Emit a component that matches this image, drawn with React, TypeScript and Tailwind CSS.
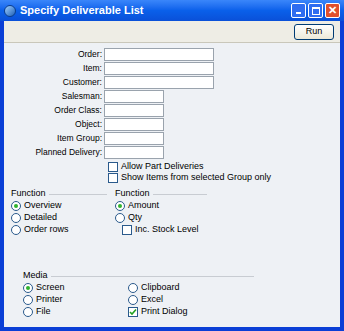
import React from "react";

const font = { fontFamily: '"Liberation Sans", Arial, sans-serif' };

function Radio({ on, label }: { on?: boolean; label: string }) {
  return (
    <div className="flex items-center h-[12px] gap-[3px]">
      <span className="w-[10px] h-[10px] rounded-full border border-[#2a5a8c] bg-white flex items-center justify-center">
        {on && <span className="w-[4px] h-[4px] rounded-full bg-[#2fb32f]" />}
      </span>
      <span>{label}</span>
    </div>
  );
}

function Check({ on, label }: { on?: boolean; label: string }) {
  return (
    <div className="flex items-center h-[11px] gap-[3px]">
      <span className="w-[10px] h-[10px] border border-[#2a5a8c] bg-white flex items-center justify-center">
        {on && (
          <svg width="8" height="8" viewBox="0 0 8 8">
            <path d="M1 4 L3 6 L7 1.5" stroke="#21a121" strokeWidth="1.6" fill="none" />
          </svg>
        )}
      </span>
      <span>{label}</span>
    </div>
  );
}

function GroupHead({ label, w }: { label: string; w: string }) {
  return (
    <div className={`flex items-center gap-[3px] h-[12px] ${w}`}>
      <span>{label}</span>
      <span className="flex-1 h-px bg-[#c8ccd2]" />
    </div>
  );
}

const fields: [string, string][] = [
  ["Order:", "w-[110px]"],
  ["Item:", "w-[110px]"],
  ["Customer:", "w-[110px]"],
  ["Salesman:", "w-[60px]"],
  ["Order Class:", "w-[60px]"],
  ["Object:", "w-[60px]"],
  ["Item Group:", "w-[60px]"],
  ["Planned Delivery:", "w-[60px]"],
];

export default function App() {
  return (
    <div className="w-[344px] h-[331px] flex flex-col bg-[#0a3fd6] text-[9px] text-black" style={font}>
      <div className="h-[21px] flex items-center px-[4px] bg-gradient-to-b from-[#3a86fa] via-[#0a60ea] to-[#0a50d8]">
        <span className="w-[12px] h-[12px] rounded-full bg-gradient-to-br from-[#9fd0ff] to-[#1b5fb5] border border-[#0b3d8c]" />
        <span className="ml-[4px] text-white font-bold text-[11px]">Specify Deliverable List</span>
        <div className="ml-auto flex gap-[2px]">
          <span className="w-[15px] h-[15px] rounded-[2px] border border-white bg-[#2f6df0] flex items-end justify-center pb-[3px]">
            <span className="w-[5px] h-[2px] bg-white" />
          </span>
          <span className="w-[15px] h-[15px] rounded-[2px] border border-white bg-[#2f6df0] flex items-center justify-center">
            <span className="w-[8px] h-[8px] border border-white border-t-2" />
          </span>
          <span className="w-[15px] h-[15px] rounded-[2px] border border-white bg-[#e0502c] flex items-center justify-center text-white font-bold text-[11px] leading-none">
            ✕
          </span>
        </div>
      </div>
      <div className="flex-1 flex flex-col mx-[4px] mb-[4px]">
        <div className="h-[22px] bg-[#eeede5] border-b border-[#c9c7ba] flex items-center justify-end pr-[6px]">
          <button className="w-[40px] h-[16px] rounded-[3px] border border-[#003c74] bg-gradient-to-b from-white to-[#ece9d8] text-[9px]">
            Run
          </button>
        </div>
        <div className="flex-1 bg-[#eef1f5] flex flex-col pt-[5px]">
          <div className="flex flex-col gap-[1px]">
            {fields.map(([l, w]) => (
              <div key={l} className="flex items-center h-[13px]">
                <span className="w-[100px] text-right pr-[2px] text-[8.5px]">{l}</span>
                <span className={`${w} h-[13px] bg-white border border-[#9aa3ad]`} />
              </div>
            ))}
          </div>
          <div className="ml-[104px] mt-[2px] flex flex-col">
            <Check label="Allow Part Deliveries" />
            <Check label="Show Items from selected Group only" />
          </div>
          <div className="flex mt-[5px] pl-[7px]">
            <div className="w-[104px] flex flex-col">
              <GroupHead label="Function" w="w-[96px]" />
              <Radio on label="Overview" />
              <Radio label="Detailed" />
              <Radio label="Order rows" />
            </div>
            <div className="flex flex-col">
              <GroupHead label="Function" w="w-[92px]" />
              <Radio on label="Amount" />
              <Radio label="Qty" />
              <div className="pl-[7px]">
                <Check label="Inc. Stock Level" />
              </div>
            </div>
          </div>
          <div className="mt-[34px] pl-[19px] flex flex-col">
            <GroupHead label="Media" w="w-[231px]" />
            <div className="flex">
              <div className="w-[105px] flex flex-col">
                <Radio on label="Screen" />
                <Radio label="Printer" />
                <Radio label="File" />
              </div>
              <div className="flex flex-col">
                <Radio label="Clipboard" />
                <Radio label="Excel" />
                <Check on label="Print Dialog" />
              </div>
            </div>
          </div>
        </div>
      </div>
    </div>
  );
}
